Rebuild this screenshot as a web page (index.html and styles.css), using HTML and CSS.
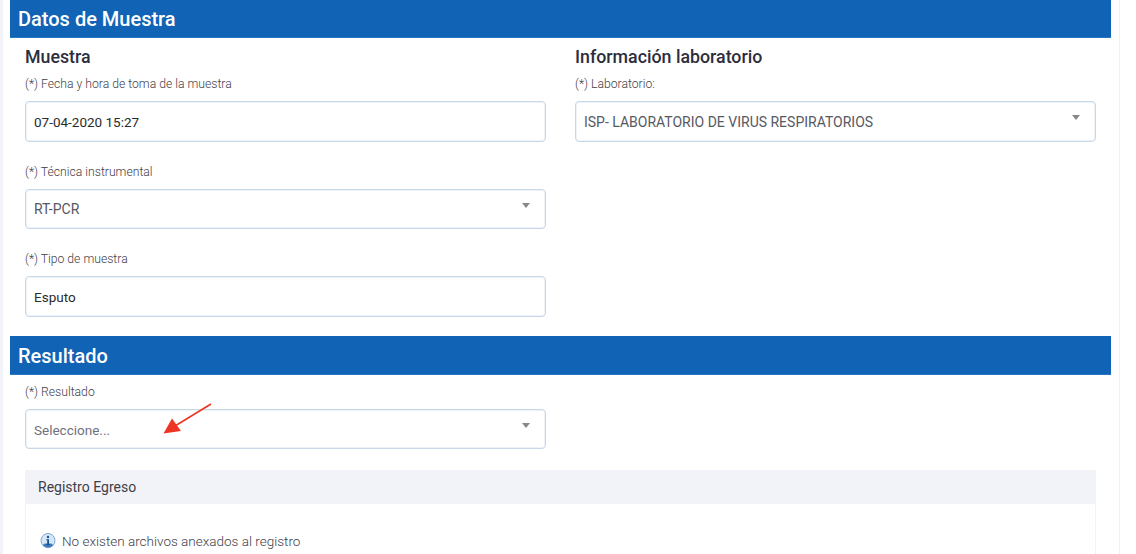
FILE: index.html
```html
<!DOCTYPE html>
<html lang="es">
<head>
<meta charset="utf-8">
<title>Datos de Muestra</title>
<link rel="stylesheet" href="styles.css">
</head>
<body>
<div class="page">
  <section class="section first">
    <h2 class="band">Datos de Muestra</h2>
    <div class="cols">
      <div class="col">
        <h3 class="sub">Muestra</h3>
        <div class="field">
          <label class="label">(*) Fecha y hora de toma de la muestra</label>
          <div class="control value">07-04-2020 15:27</div>
        </div>
        <div class="field">
          <label class="label">(*) Técnica instrumental</label>
          <div class="control select tight">RT-PCR<span class="caret"></span></div>
        </div>
        <div class="field">
          <label class="label">(*) Tipo de muestra</label>
          <div class="control value">Esputo</div>
        </div>
      </div>
      <div class="col">
        <h3 class="sub">Información laboratorio</h3>
        <div class="field">
          <label class="label">(*) Laboratorio:</label>
          <div class="control select">ISP- LABORATORIO DE VIRUS RESPIRATORIOS<span class="caret"></span></div>
        </div>
      </div>
    </div>
  </section>
  <section class="section result">
    <h2 class="band">Resultado</h2>
    <div class="cols cols-result">
      <div class="col">
        <div class="field">
          <label class="label">(*) Resultado</label>
          <div class="control select placeholder">Seleccione...<span class="caret"></span></div>
        </div>
      </div>
    </div>
    <svg class="arrow" width="80" height="50" viewBox="0 0 80 50" aria-hidden="true">
      <line x1="61" y1="9" x2="25" y2="31" stroke="#ee3524" stroke-width="1.6"/>
      <polygon points="13.5,38.5 22,23.5 31,36" fill="#ee3524"/>
    </svg>
    <div class="card">
      <div class="card-head">Registro Egreso</div>
      <div class="card-body">
        <svg class="info" width="16" height="16" viewBox="0 0 16 16" aria-hidden="true">
          <circle cx="8" cy="7.5" r="7" fill="#d5e6f5" stroke="#7fa9d3" stroke-width="1"/>
          <path d="M2.5 12a7 7 0 0 0 11 0l-2.5-1.5H5z" fill="#3f7fc0"/>
          <circle cx="8" cy="4" r="1.2" fill="#1f4f8f"/>
          <path d="M6.4 6.2H9v5h1v1H6.2v-1h1V7.2h-.8z" fill="#1f4f8f"/>
        </svg>
        <span>No existen archivos anexados al registro</span>
      </div>
    </div>
  </section>
</div>
</body>
</html>
```
FILE: styles.css
```css
html, body {
  margin: 0;
  height: 554px;
  overflow: hidden;
  background: #fff;
}
body {
  font-family: Roboto, "Liberation Sans", sans-serif;
  color: #575962;
}
.page {
  box-sizing: border-box;
  width: 1120px;
  height: 554px;
  border-left: 3px solid #f2f3f8;
  border-right: 1px solid #f0f1f6;
  padding-left: 7px;
  padding-right: 8px;
  overflow: hidden;
}
.section {
  position: relative;
}
.first {
  padding-bottom: 19px;
}
.band {
  box-sizing: border-box;
  margin: 0;
  height: 38px;
  padding: 0 8px;
  background: #1163b5;
  border-bottom: 1px solid #2a76c4;
  color: #fff;
  font-size: 20px;
  font-weight: 500;
  line-height: 39px;
}
.result .band {
  height: 39px;
  line-height: 41px;
}
.cols {
  display: grid;
  grid-template-columns: 521px 521px;
  gap: 29px;
  padding: 0 15px;
}
.cols-result {
  padding-top: 10px;
  padding-bottom: 20.5px;
}
.col {
  display: flex;
  flex-direction: column;
  gap: 23px;
}
.sub {
  margin: 10px 0 -12px;
  font-size: 17.8px;
  line-height: 18px;
  font-weight: 500;
  color: #2c2e3e;
}
.label {
  display: block;
  margin: 0 0 10px;
  font-size: 12.2px;
  font-weight: 300;
  line-height: 14px;
  color: #3f4047;
}
.control {
  position: relative;
  box-sizing: border-box;
  height: 40.5px;
  padding: 0 8px;
  border: 1px solid #c9d8e6;
  border-radius: 4px;
  box-shadow: 0 0 0 1px #eef3f8 inset;
  font-size: 14px;
  line-height: 40px;
  color: #575962;
  background: #fff;
}
.tight {
  line-height: 38px;
}
.value {
  font-size: 13.5px;
  font-weight: 400;
  color: #2b2b2b;
}
.placeholder {
  font-size: 13.5px;
  color: #6f727d;
}
.caret {
  position: absolute;
  right: 15px;
  top: 13px;
  width: 0;
  height: 0;
  border-left: 4px solid transparent;
  border-right: 4px solid transparent;
  border-top: 5px solid #888;
}
.arrow {
  position: absolute;
  left: 140px;
  top: 59px;
}
.card {
  margin: 0 15px;
}
.card-head {
  height: 34px;
  padding: 0 13px;
  background: #f2f3f8;
  font-size: 14px;
  line-height: 34px;
  color: #3f4047;
}
.card-body {
  display: flex;
  align-items: flex-start;
  gap: 6px;
  box-sizing: border-box;
  height: 100px;
  padding: 29px 14px 0;
  border: 1px solid #f2f3f8;
  border-top: 0;
  font-size: 13.5px;
  font-weight: 300;
  line-height: 16px;
  color: #3f4047;
}
```
